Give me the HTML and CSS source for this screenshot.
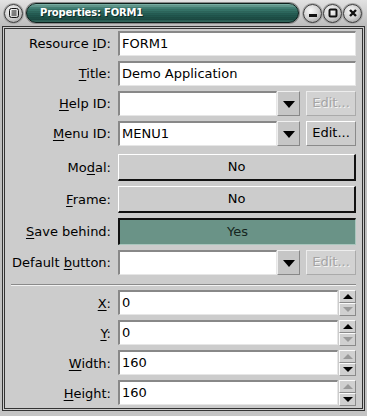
FILE: index.html
```html
<!DOCTYPE html>
<html lang="en">

<head>
    <meta charset="UTF-8">
    <title>Properties: FORM1</title>
    <link rel="stylesheet" href="styles.css">
</head>

<body>
    <div class="window">
        <div class="titlebar">
            <span class="knob">
                <svg width="10" height="10" viewBox="0 0 10 10"><rect x="0.5" y="0.5" width="9" height="9" rx="2" fill="none" stroke="#111"/><path d="M2.5 3h5M2.5 5h5M2.5 7h5" stroke="#111"/></svg>
            </span>
            <div class="caption">Properties: FORM1</div>
            <span class="knob">
                <svg width="10" height="10" viewBox="0 0 10 10"><rect x="1" y="6" width="8" height="3" fill="#111"/></svg>
            </span>
            <span class="knob">
                <svg width="10" height="10" viewBox="0 0 10 10"><rect x="1.5" y="1.5" width="7" height="7" rx="1" fill="none" stroke="#111" stroke-width="2"/></svg>
            </span>
            <span class="knob">
                <svg width="10" height="10" viewBox="0 0 10 10"><path d="M2 2l6 6M8 2l-6 6" stroke="#111" stroke-width="2.4"/></svg>
            </span>
        </div>

        <div class="panel">
            <div class="row">
                <label>Resource <u>I</u>D:</label>
                <div class="text">FORM1</div>
            </div>
            <div class="row">
                <label><u>T</u>itle:</label>
                <div class="text">Demo Application</div>
            </div>
            <div class="row">
                <label><u>H</u>elp ID:</label>
                <div class="combo">
                    <div class="text"></div>
                    <span class="drop"></span>
                    <span class="edit off">Edit...</span>
                </div>
            </div>
            <div class="row">
                <label><u>M</u>enu ID:</label>
                <div class="combo">
                    <div class="text">MENU1</div>
                    <span class="drop"></span>
                    <span class="edit">Edit...</span>
                </div>
            </div>
            <div class="row tall first">
                <label>Mo<u>d</u>al:</label>
                <div class="toggle">No</div>
            </div>
            <div class="row tall">
                <label><u>F</u>rame:</label>
                <div class="toggle">No</div>
            </div>
            <div class="row tall">
                <label><u>S</u>ave behind:</label>
                <div class="toggle on">Yes</div>
            </div>
            <div class="row">
                <label>Default <u>b</u>utton:</label>
                <div class="combo">
                    <div class="text"></div>
                    <span class="drop"></span>
                    <span class="edit off">Edit...</span>
                </div>
            </div>

            <div class="sep"></div>

            <div class="row">
                <label><u>X</u>:</label>
                <div class="spin">
                    <div class="text">0</div>
                    <div class="arrows"><span class="up"></span><span class="down off"></span></div>
                </div>
            </div>
            <div class="row">
                <label><u>Y</u>:</label>
                <div class="spin">
                    <div class="text">0</div>
                    <div class="arrows"><span class="up"></span><span class="down off"></span></div>
                </div>
            </div>
            <div class="row">
                <label><u>W</u>idth:</label>
                <div class="spin">
                    <div class="text">160</div>
                    <div class="arrows"><span class="up off"></span><span class="down"></span></div>
                </div>
            </div>
            <div class="row">
                <label><u>H</u>eight:</label>
                <div class="spin">
                    <div class="text">160</div>
                    <div class="arrows"><span class="up off"></span><span class="down"></span></div>
                </div>
            </div>
        </div>
    </div>
</body>

</html>
```

FILE: styles.css
```css
* {
    margin: 0;
    padding: 0;
    box-sizing: border-box;
}

body {
    background: #c4c4c4;
    font-family: "DejaVu Sans", Verdana, sans-serif;
    font-size: 13px;
    color: #000;
}

.window {
    width: 367px;
    height: 416px;
    padding: 0 2px 5px 2px;
    background: linear-gradient(#e2e2e2, #bdbdbd 26px, #c4c4c4);
}

/* 标题栏 */
.titlebar {
    height: 26px;
    display: flex;
    align-items: center;
    padding: 0 3px 0 1px;
}

.knob {
    width: 19px;
    height: 19px;
    border-radius: 50%;
    display: flex;
    align-items: center;
    justify-content: center;
    background: radial-gradient(circle at 40% 35%, #fafafa, #d2d2d2 50%, #8a8a8a);
    border: 1px solid #3a3a3a;
    box-shadow: 0 0 0 1px #a4a4a4;
    margin-left: 1px;
}

.caption {
    flex: 1;
    height: 20px;
    margin: 0 3px 0 3px;
    border-radius: 10px;
    border: 1px solid #0c1f1b;
    box-shadow: 0 0 0 1px #8a8a8a;
    background:
        repeating-linear-gradient(transparent 0, transparent 1px, rgba(0, 0, 0, 0.08) 1px, rgba(0, 0, 0, 0.08) 2px),
        linear-gradient(#7fb3a8, #3d7d71 25%, #255f55 55%, #1b4b43 85%, #3c7468);
    color: #fff;
    font-weight: bold;
    font-size: 10px;
    letter-spacing: -0.2px;
    line-height: 18px;
    padding-left: 13px;
    text-shadow: 1px 1px 0 #0e2b26;
}

/* 内容区 */
.panel {
    height: 385px;
    border: 3px double #333;
    background: #cccccc;
    padding: 2px 6px 0 5px;
}

.row {
    display: grid;
    grid-template-columns: 102px 238px;
    column-gap: 6px;
    align-items: center;
    height: 25px;
    margin-bottom: 5px;
}

.row.tall {
    height: 27px;
}

.row.first {
    margin-top: 8px;
}

label {
    text-align: right;
    padding-right: 1px;
    white-space: nowrap;
}

u {
    text-underline-offset: 2px;
}

.text {
    height: 25px;
    background: #fff;
    border-top: 2px solid #888;
    border-left: 2px solid #888;
    border-right: 1px solid #e6e6e6;
    border-bottom: 1px solid #e6e6e6;
    padding-left: 2px;
    line-height: 21px;
}

.combo {
    display: flex;
    align-items: center;
}

.combo .text {
    width: 159px;
}

.drop {
    width: 23px;
    height: 25px;
    background: #c6c6c6;
    border: 1px solid #888;
    border-top-color: #f0f0f0;
    border-left-color: #f0f0f0;
    position: relative;
}

.drop::after {
    content: "";
    position: absolute;
    left: 5px;
    top: 9px;
    border-left: 6px solid transparent;
    border-right: 6px solid transparent;
    border-top: 7px solid #000;
}

.edit {
    width: 50px;
    height: 25px;
    margin-left: 6px;
    background: #cccccc;
    border: 1px solid #8a8a8a;
    border-top-color: #fff;
    border-left-color: #fff;
    text-align: center;
    line-height: 22px;
}

.edit.off {
    background: #d2d2d2;
    color: #a4a4a4;
    text-shadow: 1px 1px 0 #f4f4f4;
    border-color: #aaa;
    border-top-color: #ededed;
    border-left-color: #ededed;
}

.toggle {
    height: 27px;
    background: #cccccc;
    border-top: 1px solid #fff;
    border-left: 1px solid #fff;
    border-right: 2px solid #111;
    border-bottom: 2px solid #111;
    text-align: center;
    line-height: 24px;
}

.toggle.on {
    background: #6a9387;
    color: #152520;
    border-top: 2px solid #111;
    border-left: 2px solid #111;
    border-right: 1px solid #a9c6bd;
    border-bottom: 1px solid #a9c6bd;
}

.sep {
    height: 2px;
    border-top: 1px solid #8a8a8a;
    border-bottom: 1px solid #f2f2f2;
    margin: 9px 0 4px 1px;
}

.spin {
    display: flex;
}

.spin .text {
    flex: 1;
}

.arrows {
    width: 17px;
    display: flex;
    flex-direction: column;
    margin-left: 1px;
}

.arrows span {
    height: 13px;
    background: #d0d0d0;
    border: 1px solid #8a8a8a;
    border-top-color: #fafafa;
    border-left-color: #fafafa;
    position: relative;
}

.arrows span::after {
    content: "";
    position: absolute;
    left: 3px;
    top: 3px;
    border-left: 5px solid transparent;
    border-right: 5px solid transparent;
}

.arrows .up::after {
    border-bottom: 5px solid #000;
}

.arrows .down::after {
    border-top: 5px solid #000;
}

.arrows .up.off::after {
    border-bottom-color: #999;
}

.arrows .down.off::after {
    border-top-color: #999;
}
```
